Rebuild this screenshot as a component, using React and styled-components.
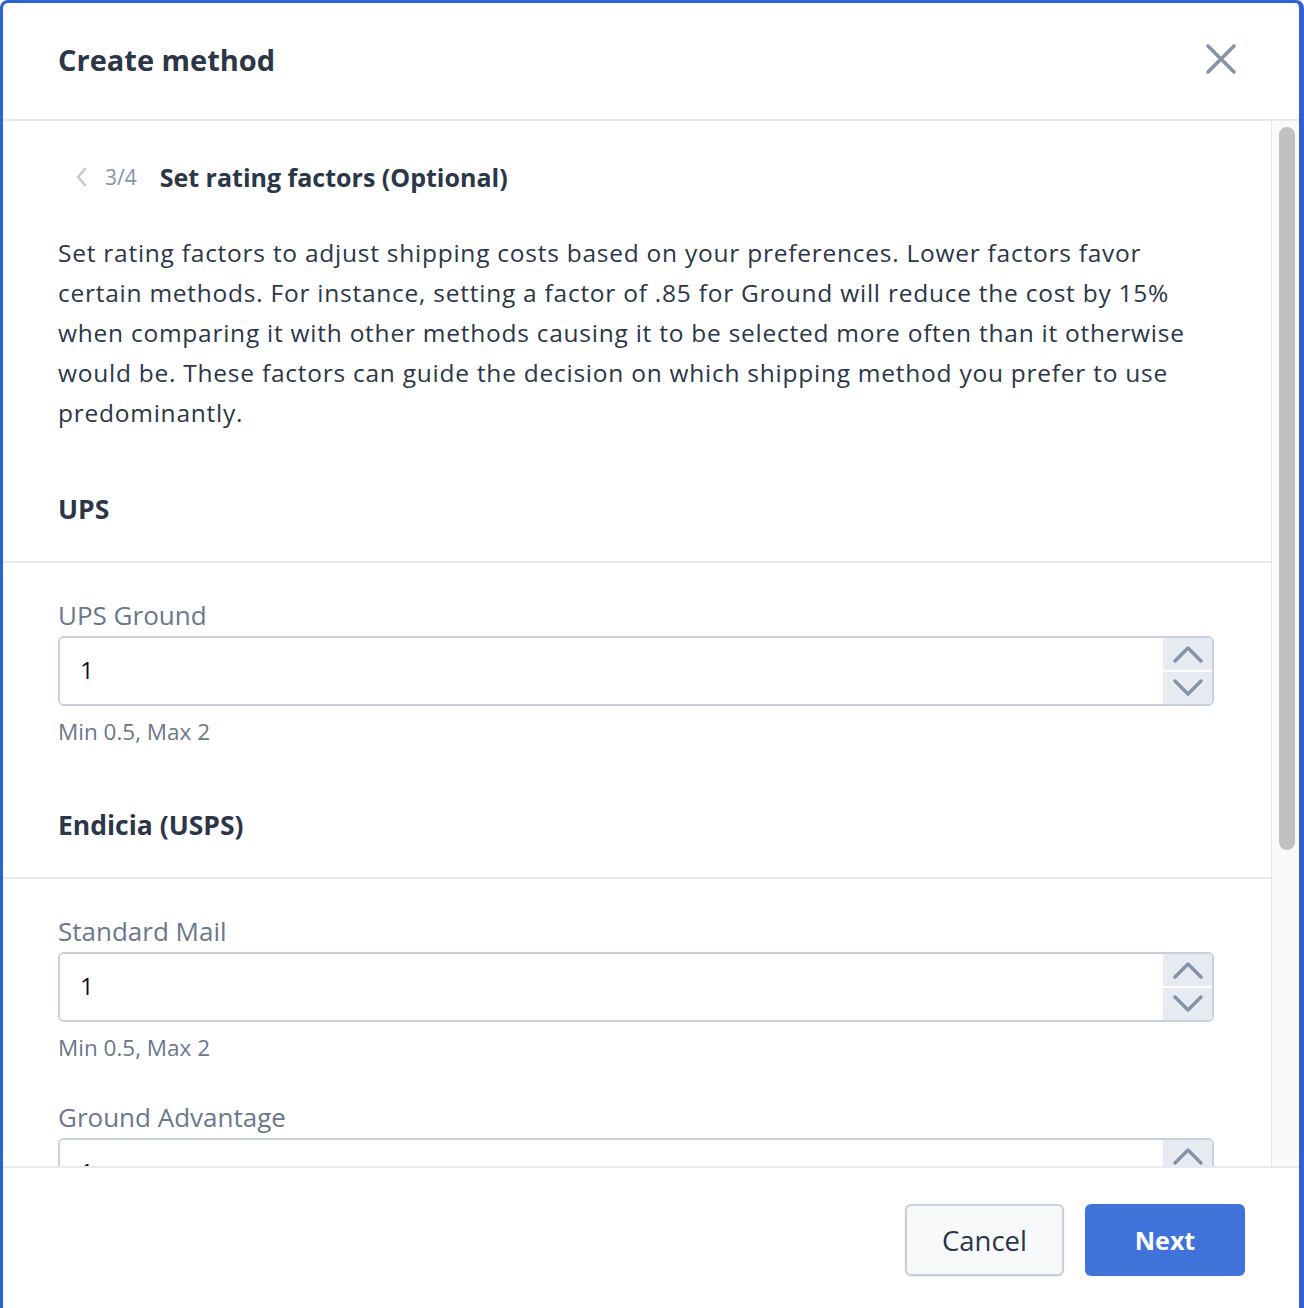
import React from "react";
import styled, { createGlobalStyle } from "styled-components";

const GlobalStyle = createGlobalStyle`
  html, body {
    margin: 0;
    padding: 0;
    background: #fff;
  }
  body {
    font-family: "Open Sans", "Liberation Sans", sans-serif;
    color: #2b3648;
  }
  * {
    box-sizing: border-box;
  }
`;

const Frame = styled.div`
  width: 1304px;
  height: 1308px;
  display: flex;
  flex-direction: column;
  border: 3px solid #2c62d2;
  border-right-width: 5px;
  border-bottom: none;
  border-radius: 8px 8px 0 0;
  overflow: hidden;
  background: #fff;
`;

const Header = styled.header`
  height: 118px;
  flex-shrink: 0;
  display: flex;
  align-items: center;
  justify-content: space-between;
  padding: 0 62px 4px 55px;
  border-bottom: 2px solid #e7ebf1;
`;

const Title = styled.h1`
  margin: 0;
  font-size: 29px;
  font-weight: 700;
  color: #2b3648;
`;

const CloseButton = styled.button`
  width: 32px;
  height: 32px;
  padding: 0;
  border: 0;
  background: none;
  display: flex;
  align-items: center;
  justify-content: center;
  cursor: pointer;
`;

const Body = styled.div`
  flex: 1;
  min-height: 0;
  display: flex;
`;

const Scroller = styled.div`
  flex: 1;
  overflow: hidden;
  padding-top: 36px;
`;

const ScrollTrack = styled.div`
  width: 28px;
  flex-shrink: 0;
  background: #fafafa;
  border-left: 1px solid #e8e8e8;
  padding: 6px 4px 0 7px;
`;

const ScrollThumb = styled.div`
  height: 723px;
  background: #c1c1c1;
  border-radius: 8px;
`;

const Intro = styled.div`
  padding: 0 57px 0 55px;
`;

const Crumbs = styled.div`
  height: 40px;
  display: flex;
  align-items: center;
  padding-left: 17px;
`;

const StepCount = styled.span`
  font-size: 21px;
  color: #8592a8;
  margin: 0 23px 0 17px;
`;

const StepTitle = styled.h2`
  margin: 0;
  font-size: 25px;
  font-weight: 700;
  color: #2b3648;
`;

const Lead = styled.p`
  margin: 36px 0 0;
  font-size: 24.5px;
  letter-spacing: 0.75px;
  line-height: 40px;
  color: #2b3648;
`;

const SectionHead = styled.h3`
  margin: 0;
  padding: 56px 55px 32px;
  font-size: 26.5px;
  line-height: 40px;
  font-weight: 700;
  color: #2b3648;
  border-bottom: 2px solid #e7ebf1;
`;

const Fields = styled.div`
  padding: 36px 57px 3px 55px;
  display: flex;
  flex-direction: column;
  gap: 39px;
`;

const Field = styled.div`
  display: flex;
  flex-direction: column;
`;

const Label = styled.label`
  font-size: 26px;
  line-height: 32px;
  color: #6b778c;
`;

const InputBox = styled.div`
  margin-top: 5px;
  height: 70px;
  display: flex;
  border: 2px solid #c6d0e0;
  border-radius: 6px;
  overflow: hidden;
`;

const NumberInput = styled.input`
  flex: 1;
  min-width: 0;
  border: 0;
  outline: none;
  padding: 0 20px 4px;
  font-family: inherit;
  font-size: 24px;
  color: #111;
  background: #fff;
`;

const Stepper = styled.div`
  width: 49px;
  display: flex;
  flex-direction: column;
  gap: 2px;
  background: #fff;
`;

const StepButton = styled.button`
  flex: 1;
  padding: 0;
  border: 0;
  background: #e6ebf2;
  display: flex;
  align-items: center;
  justify-content: center;
  cursor: pointer;
`;

const Hint = styled.div`
  margin-top: 12px;
  font-size: 22.5px;
  line-height: 28px;
  color: #6b778c;
`;

const Footer = styled.footer`
  height: 142px;
  flex-shrink: 0;
  display: flex;
  justify-content: flex-end;
  align-items: flex-start;
  gap: 21px;
  padding: 36px 54px 0;
  border-top: 2px solid #e7ebf1;
`;

const Button = styled.button`
  width: ${(props) => (props.primary ? "160px" : "159px")};
  height: 72px;
  border-radius: 6px;
  font-family: inherit;
  font-size: ${(props) => (props.primary ? "25px" : "27.5px")};
  font-weight: ${(props) => (props.primary ? 700 : 400)};
  color: ${(props) => (props.primary ? "#fff" : "#2b3648")};
  background: ${(props) => (props.primary ? "#3f73d9" : "#f8f9fb")};
  border: ${(props) => (props.primary ? "0" : "2px solid #c6d0e0")};
  box-shadow: ${(props) =>
    props.primary ? "none" : "0 1px 2px rgba(40, 60, 90, 0.12)"};
  cursor: pointer;
`;

const Chevron = ({ dir }) => (
  <svg width="30" height="18" viewBox="0 0 30 18">
    <polyline
      points={dir === "up" ? "2,16 15,3 28,16" : "2,2 15,15 28,2"}
      fill="none"
      stroke="#8592a8"
      strokeWidth="3.4"
      strokeLinecap="round"
      strokeLinejoin="round"
    />
  </svg>
);

const sections = [
  { name: "UPS", fields: ["UPS Ground"] },
  {
    name: "Endicia (USPS)",
    fields: [
      "Standard Mail",
      "Ground Advantage",
      "Priority Mail",
      "Priority Mail Express",
    ],
  },
];

function RatingField({ label }) {
  return (
    <Field>
      <Label>{label}</Label>
      <InputBox>
        <NumberInput type="text" defaultValue="1" />
        <Stepper>
          <StepButton>
            <Chevron dir="up" />
          </StepButton>
          <StepButton>
            <Chevron dir="down" />
          </StepButton>
        </Stepper>
      </InputBox>
      <Hint>Min 0.5, Max 2</Hint>
    </Field>
  );
}

export default function App() {
  return (
    <>
      <GlobalStyle />
      <Frame>
        <Header>
          <Title>Create method</Title>
          <CloseButton aria-label="Close">
            <svg width="32" height="32" viewBox="0 0 32 32">
              <path
                d="M3 3 L29 29 M29 3 L3 29"
                stroke="#8592a8"
                strokeWidth="3.6"
                strokeLinecap="round"
              />
            </svg>
          </CloseButton>
        </Header>
        <Body>
          <Scroller>
            <Intro>
              <Crumbs>
                <svg width="13" height="20" viewBox="0 0 13 20">
                  <polyline
                    points="10,2 3,10 10,18"
                    fill="none"
                    stroke="#c3c9d3"
                    strokeWidth="2.6"
                    strokeLinecap="round"
                    strokeLinejoin="round"
                  />
                </svg>
                <StepCount>3/4</StepCount>
                <StepTitle>Set rating factors (Optional)</StepTitle>
              </Crumbs>
              <Lead>
                Set rating factors to adjust shipping costs based on your
                preferences. Lower factors favor certain methods. For instance,
                setting a factor of .85 for Ground will reduce the cost by 15%
                when comparing it with other methods causing it to be selected
                more often than it otherwise would be. These factors can guide
                the decision on which shipping method you prefer to use
                predominantly.
              </Lead>
            </Intro>
            {sections.map((section) => (
              <section key={section.name}>
                <SectionHead>{section.name}</SectionHead>
                <Fields>
                  {section.fields.map((f) => (
                    <RatingField key={f} label={f} />
                  ))}
                </Fields>
              </section>
            ))}
          </Scroller>
          <ScrollTrack>
            <ScrollThumb />
          </ScrollTrack>
        </Body>
        <Footer>
          <Button>Cancel</Button>
          <Button primary>Next</Button>
        </Footer>
      </Frame>
    </>
  );
}
